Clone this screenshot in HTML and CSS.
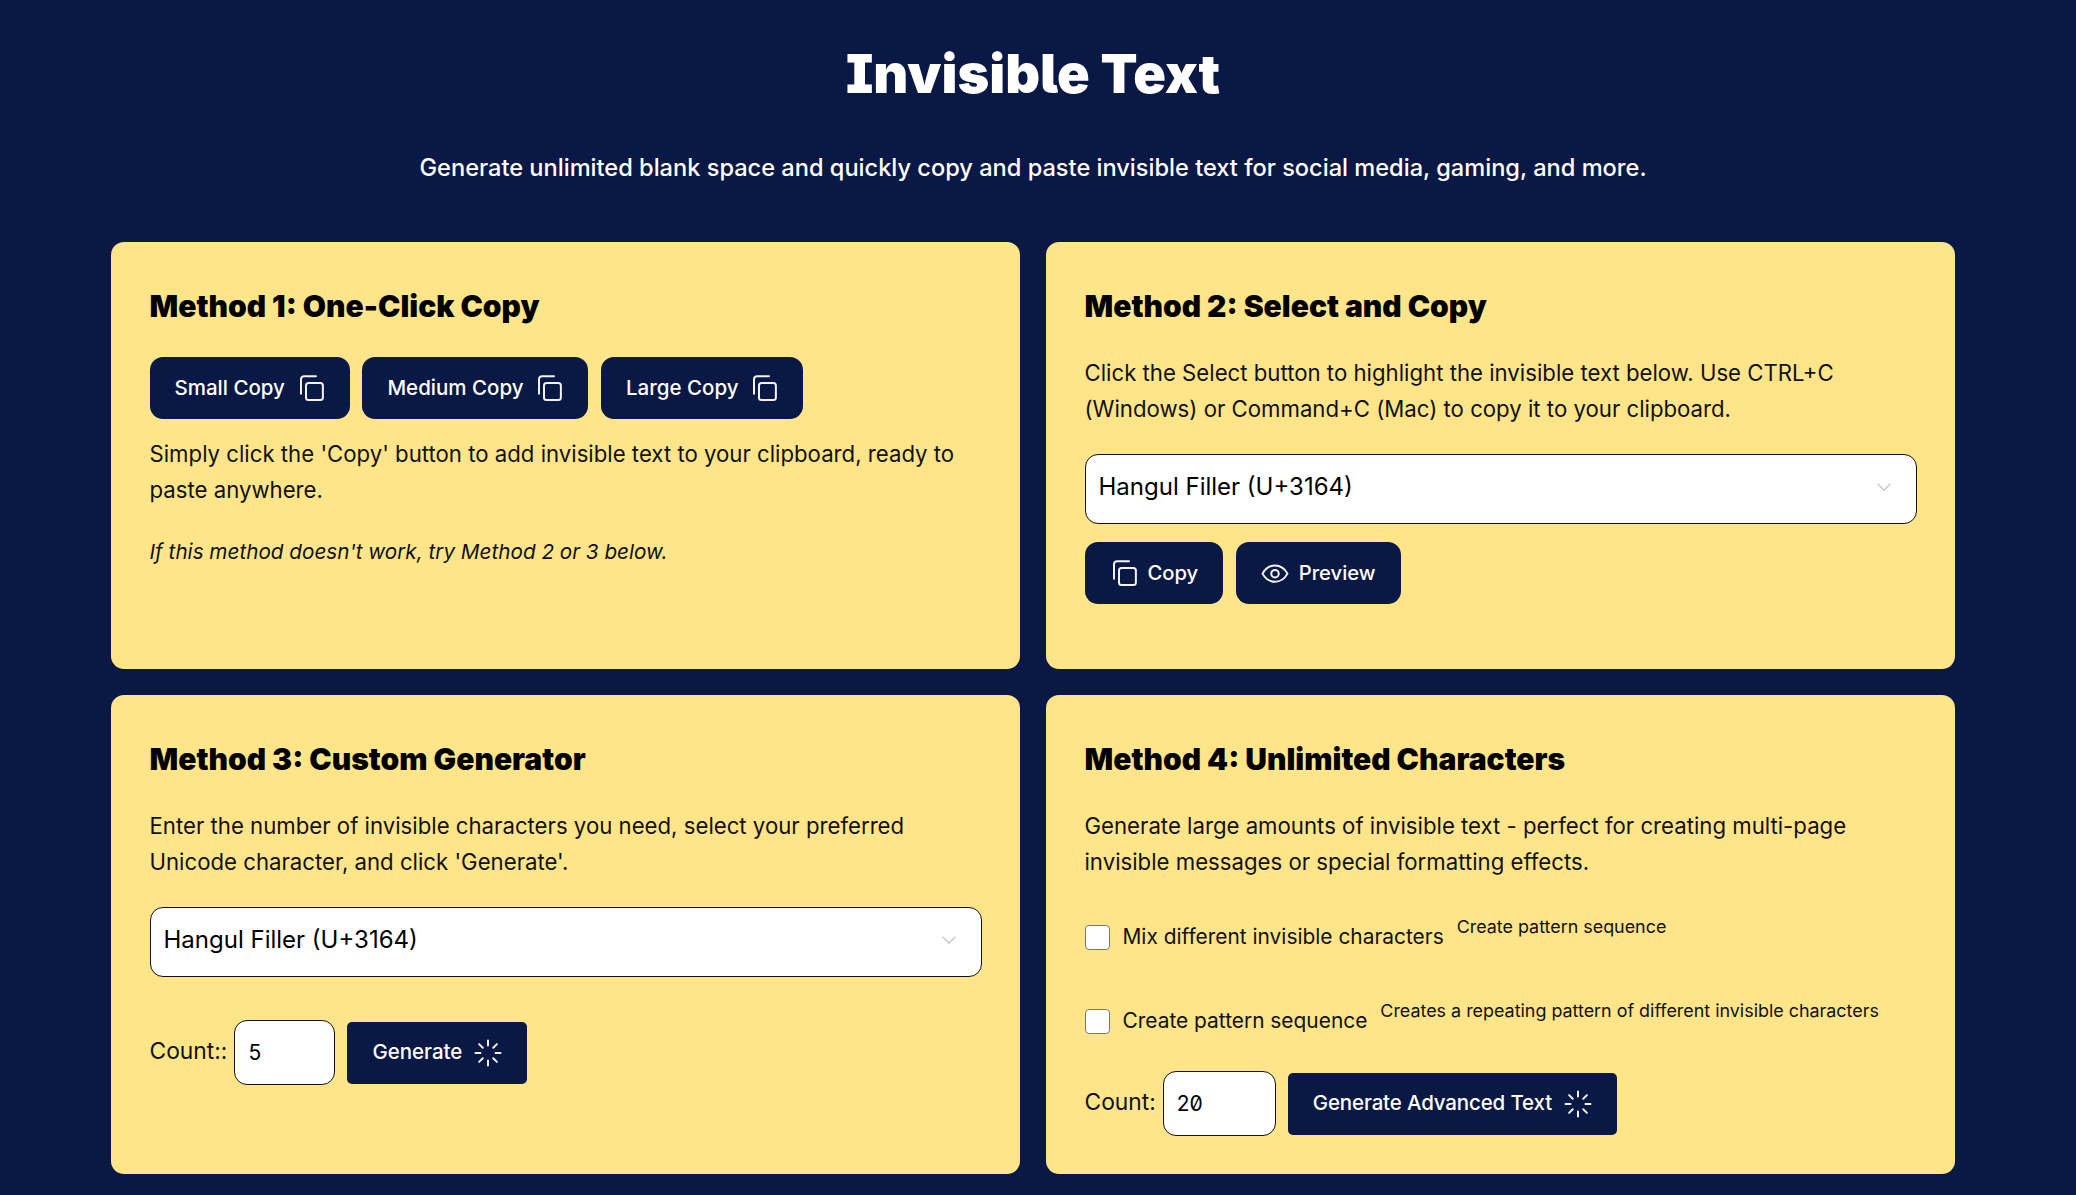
FILE: index.html
```html
<!DOCTYPE html>
<html lang="en">
<head>
    <meta charset="UTF-8">
    <meta name="viewport" content="width=device-width, initial-scale=1.0">
    <title>Invisible Text</title>
    <link rel="stylesheet" href="styles.css">
</head>
<body>
    <svg class="sprites" width="0" height="0" aria-hidden="true">
        <symbol id="icon-copy" viewBox="0 0 24 24">
            <rect x="8" y="8" width="13.5" height="13.5" rx="2"/>
            <path d="M4 16.500V5a2.500 2.500 0 0 1 2.500-2.500H16"/>
        </symbol>
        <symbol id="icon-eye" viewBox="0 0 24 24">
            <path d="M2 12.500C4.500 8 8 6 12 6s7.500 2 10 6.500C19.500 17 16 19 12 19s-7.500-2-10-6.500z"/>
            <circle cx="12" cy="12.500" r="3"/>
        </symbol>
        <symbol id="icon-loader" viewBox="0 0 24 24">
            <path d="M12 2v4M12 18v4M4.900 4.900l2.900 2.900M16.200 16.200l2.900 2.900M2 12h4M18 12h4M4.900 19.100l2.900-2.900M16.200 7.800l2.900-2.900"/>
        </symbol>
        <symbol id="icon-chevron" viewBox="0 0 24 24">
            <path d="M5 8.500l7 7 7-7"/>
        </symbol>
    </svg>

    <header class="page-head">
        <h1>Invisible Text</h1>
        <p>Generate unlimited blank space and quickly copy and paste invisible text for social media, gaming, and more.</p>
    </header>

    <main class="methods">
        <section class="card">
            <h2>Method 1: One-Click Copy</h2>
            <div class="btn-row btn-row-first">
                <button class="btn">Small Copy <svg class="icon"><use href="#icon-copy"/></svg></button>
                <button class="btn">Medium Copy <svg class="icon"><use href="#icon-copy"/></svg></button>
                <button class="btn">Large Copy <svg class="icon"><use href="#icon-copy"/></svg></button>
            </div>
            <p class="text text-tight">Simply click the 'Copy' button to add invisible text to your clipboard, ready to paste anywhere.</p>
            <p class="note-line">If this method doesn't work, try Method 2 or 3 below.</p>
        </section>

        <section class="card">
            <h2>Method 2: Select and Copy</h2>
            <p class="text">Click the Select button to highlight the invisible text below. Use CTRL+C (Windows) or Command+C (Mac) to copy it to your clipboard.</p>
            <div class="select-wrap">
                <select class="select">
                    <option>Hangul Filler (U+3164)</option>
                </select>
                <svg class="chevron"><use href="#icon-chevron"/></svg>
            </div>
            <div class="btn-row">
                <button class="btn btn-lead"><svg class="icon"><use href="#icon-copy"/></svg> Copy</button>
                <button class="btn btn-lead"><svg class="icon"><use href="#icon-eye"/></svg> Preview</button>
            </div>
        </section>

        <section class="card">
            <h2>Method 3: Custom Generator</h2>
            <p class="text">Enter the number of invisible characters you need, select your preferred Unicode character, and click 'Generate'.</p>
            <div class="select-wrap">
                <select class="select">
                    <option>Hangul Filler (U+3164)</option>
                </select>
                <svg class="chevron"><use href="#icon-chevron"/></svg>
            </div>
            <div class="count-row count-row-far">
                <label class="count-label" for="count3">Count::</label>
                <input id="count3" class="count-input" type="number" value="5">
                <button class="btn btn-square">Generate <svg class="icon"><use href="#icon-loader"/></svg></button>
            </div>
        </section>

        <section class="card">
            <h2>Method 4: Unlimited Characters</h2>
            <p class="text">Generate large amounts of invisible text - perfect for creating multi-page invisible messages or special formatting effects.</p>
            <div class="check-row check-row-first">
                <input id="mix" class="check" type="checkbox">
                <label for="mix">Mix different invisible characters</label>
                <small>Create pattern sequence</small>
            </div>
            <div class="check-row">
                <input id="pattern" class="check" type="checkbox">
                <label for="pattern">Create pattern sequence</label>
                <small>Creates a repeating pattern of different invisible characters</small>
            </div>
            <div class="count-row">
                <label class="count-label" for="count4">Count:</label>
                <input id="count4" class="count-input count-input-wide" type="number" value="20">
                <button class="btn btn-square btn-long">Generate Advanced Text <svg class="icon"><use href="#icon-loader"/></svg></button>
            </div>
        </section>
    </main>
</body>
</html>
```

FILE: styles.css
```css
* {
    box-sizing: border-box;
}
body {
    margin: 0;
    padding: 0 10px 21px 0;
    background-color: #0a1845;
    color: #111;
    font-family: Inter, "Liberation Sans", sans-serif;
    font-size: 22.200px;
    line-height: 36px;
}
.sprites {
    position: absolute;
}
.page-head {
    height: 242px;
    padding-top: 42px;
    text-align: center;
    color: #fff;
}
.page-head h1 {
    margin: 0;
    font-size: 54px;
    line-height: 64px;
    font-weight: 900;
    font-feature-settings: "ss02";
}
.page-head p {
    margin: 44px 0 0;
    font-size: 23.600px;
    font-weight: 500;
}
.methods {
    display: grid;
    grid-template-columns: 1fr 1fr;
    grid-template-rows: 427px 479px;
    gap: 26px;
    margin: 0 111px;
}
.card {
    padding: 44px 38.500px 0;
    background-color: #ffe58a;
    border-radius: 13px;
}
.card h2 {
    margin: 0;
    color: #000;
    font-size: 30px;
    line-height: 40px;
    font-weight: 900;
}
.text {
    margin: 29px 0 0;
}
.text-tight {
    margin-top: 17px;
}
.note-line {
    margin: 26px 0 0;
    font-style: italic;
    font-size: 20.700px;
}
.btn-row {
    display: flex;
    gap: 12.500px;
    margin-top: 18px;
}
.btn-row-first {
    margin-top: 31px;
}
.btn {
    display: flex;
    align-items: center;
    gap: 11px;
    height: 62px;
    padding: 0 24px 2px 25px;
    border: 0;
    border-radius: 13px;
    background-color: #0a1845;
    color: #fff;
    font-family: inherit;
    font-size: 20.500px;
    font-weight: 500;
}
.btn-lead {
    gap: 9px;
    padding-left: 24px;
    padding-right: 25px;
    font-size: 20.200px;
}
.btn-square {
    border-radius: 5px;
}
.btn-long {
    letter-spacing: -0.150px;
}
.icon {
    flex: none;
    width: 30px;
    height: 30px;
    margin-top: 2px;
    fill: none;
    stroke: #f1f3f8;
    stroke-width: 1.600;
    stroke-linecap: round;
    stroke-linejoin: round;
}
.select-wrap {
    position: relative;
    margin-top: 27px;
}
.select {
    display: block;
    width: 100%;
    height: 70px;
    padding: 0 13px 6px;
    border: 1.500px solid #111;
    border-radius: 13px;
    background-color: #fff;
    color: #000;
    font-family: inherit;
    font-size: 24px;
    appearance: none;
}
.chevron {
    position: absolute;
    top: 22px;
    right: 22px;
    width: 22px;
    height: 22px;
    fill: none;
    stroke: #c8c8c8;
    stroke-width: 1.600;
}
.count-row {
    display: flex;
    align-items: center;
    gap: 7px;
    margin-top: 28px;
}
.count-row-far {
    margin-top: 43px;
}
.count-label {
    margin-bottom: 3px;
    font-size: 22.800px;
}
.count-input {
    width: 101px;
    height: 65px;
    margin-right: 5px;
    padding: 0 13px;
    border: 1.500px solid #111;
    border-radius: 13px;
    background-color: #fff;
    color: #000;
    font-family: inherit;
    font-size: 21px;
    font-feature-settings: "zero";
    appearance: textfield;
}
.count-input-wide {
    width: 113px;
}
.check-row {
    display: flex;
    align-items: flex-start;
    height: 48px;
    margin-top: 36px;
}
.check-row-first {
    margin-top: 31px;
}
.check {
    width: 25px;
    height: 25px;
    margin: 14px 13px 0 0;
    border: 1.500px solid #777;
    border-radius: 4px;
    background-color: #fff;
    appearance: none;
}
.check-row label {
    margin-top: 8px;
    font-size: 20.900px;
}
.check-row small {
    margin-left: 13px;
    margin-top: 1px;
    font-size: 17.900px;
    line-height: 30px;
}
```
